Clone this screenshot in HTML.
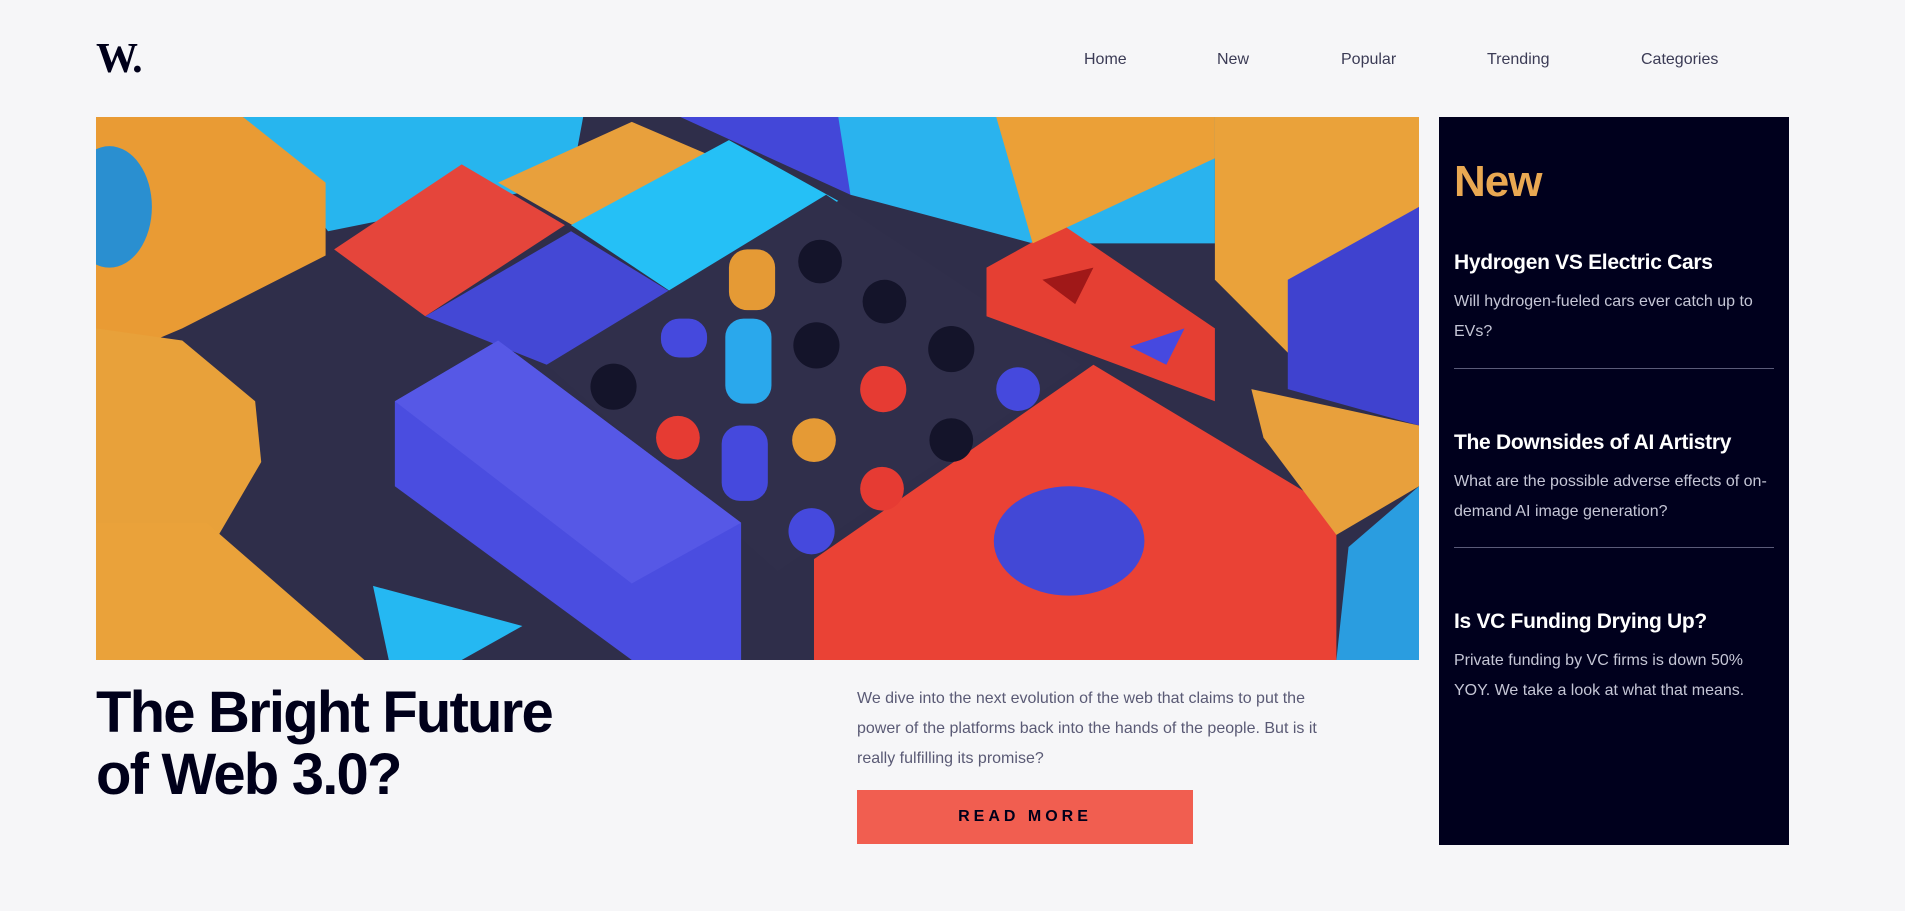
<!DOCTYPE html>
<html><head><meta charset="utf-8"><style>
*{margin:0;padding:0;box-sizing:border-box}
body{width:1905px;height:911px;background:#f6f6f8;font-family:"Liberation Sans",sans-serif;position:relative;overflow:hidden}
.logo{position:absolute;left:96px;top:35px;font-family:"Liberation Serif",serif;font-weight:bold;font-size:42px;color:#00001a;letter-spacing:-2px}
.nav a{position:absolute;top:51px;font-size:16px;color:#3b3b55;text-decoration:none}
.hero{position:absolute;left:96px;top:117px;width:1323px;height:543px;overflow:hidden}
h1{position:absolute;left:96px;top:682px;font-size:58px;line-height:62px;font-weight:bold;color:#00001a;letter-spacing:-1.8px}
.desc{position:absolute;left:857px;top:684px;width:480px;font-size:16px;line-height:30px;color:#5a5a75}
.btn{position:absolute;left:857px;top:790px;width:336px;height:54px;background:#f15e50;color:#00001a;font-weight:bold;font-size:16px;letter-spacing:4px;text-align:center;line-height:54px}
.side{position:absolute;left:1439px;top:117px;width:350px;height:728px;background:#00001d}
.side h2{position:absolute;left:15px;top:40px;font-size:44px;color:#e9a852;letter-spacing:-1px}
.item{position:absolute;left:15px;width:320px}
.item h3{font-size:21px;color:#fff;letter-spacing:-0.3px}
.item p{margin-top:12px;font-size:16px;line-height:30px;color:#c5c6d6}
.sep{position:absolute;left:15px;width:320px;height:1px;background:#5a5b78}
</style></head><body>
<div class="logo">W.</div>
<div class="nav"><a style="left:1084px">Home</a><a style="left:1217px">New</a><a style="left:1341px">Popular</a><a style="left:1487px">Trending</a><a style="left:1641px">Categories</a></div>
<div class="hero"><svg width="1323" height="543" viewBox="79 96 1089 447" preserveAspectRatio="none">
<rect x="79" y="96" width="1089" height="447" fill="#2f2e4a"/>
<polygon points="200,96 480,96 470,150 270,190" fill="#27b5ee"/>
<polygon points="79,96 200,96 268,150 268,210 150,270 79,300" fill="#e99b34"/>
<ellipse cx="90" cy="170" rx="35" ry="50" fill="#2a8fd0"/>
<polygon points="79,270 150,280 210,330 215,380 180,440 79,470" fill="#e8a13a"/>
<polygon points="79,430 170,430 300,543 79,543" fill="#eaa23a"/>
<polygon points="275,205 380,135 465,185 350,260" fill="#e5453b"/>
<polygon points="410,150 520,100 590,130 480,190" fill="#e8a03c"/>
<polygon points="470,185 600,115 690,165 560,245" fill="#25c0f6"/>
<polygon points="560,96 810,96 700,160" fill="#4347d8"/>
<polygon points="690,96 1000,96 1000,200 850,200 700,160" fill="#2ab3ee"/>
<polygon points="350,260 470,190 560,245 450,300" fill="#4448d5"/>
<polygon points="450,300 680,160 890,300 640,470" fill="#302f4b"/>
<polygon points="325,330 410,280 610,430 610,543 520,543 325,400" fill="#4a4de0"/>
<polygon points="325,330 410,280 610,430 520,480" fill="#5658e6"/>
<polygon points="670,460 900,300 1100,420 1100,543 670,543" fill="#ea4235"/>
<polygon points="812,220 875,185 1000,270 1000,330 920,300 812,260" fill="#e53f33"/>
<ellipse cx="880" cy="445" rx="62" ry="45" fill="#4248d6"/>
<polygon points="820,96 1000,96 1000,130 850,200" fill="#eba037"/>
<polygon points="1000,96 1168,96 1168,200 1060,290 1000,230" fill="#eaa23a"/>
<polygon points="1060,230 1168,170 1168,350 1060,320" fill="#3f42cf"/>
<polygon points="1030,320 1168,350 1168,400 1100,440 1040,360" fill="#e8a03c"/>
<polygon points="307,482 430,515 380,543 320,543" fill="#25b8f2"/>
<polygon points="1110,450 1168,400 1168,543 1100,543" fill="#2a9de0"/>
<polygon points="930,285 975,270 960,300" fill="#4649e0"/>
<polygon points="858,230 900,220 885,250" fill="#a01818"/>
<g fill="#14142a"><circle cx="675" cy="215" r="18"/><circle cx="728" cy="248" r="18"/><circle cx="672" cy="284" r="19"/><circle cx="783" cy="287" r="19"/><circle cx="505" cy="318" r="19"/><circle cx="783" cy="362" r="18"/></g>
<rect x="600" y="205" width="38" height="50" rx="15" fill="#e59a35"/>
<rect x="597" y="262" width="38" height="70" rx="15" fill="#2aa8ec"/>
<rect x="544" y="262" width="38" height="32" rx="15" fill="#4549dd"/>
<rect x="594" y="350" width="38" height="62" rx="15" fill="#4549dd"/>
<circle cx="727" cy="320" r="19" fill="#e63b33"/><circle cx="838" cy="320" r="18" fill="#4549dd"/>
<circle cx="558" cy="360" r="18" fill="#e63b33"/><circle cx="670" cy="362" r="18" fill="#e59a35"/>
<circle cx="726" cy="402" r="18" fill="#e63b33"/><circle cx="668" cy="437" r="19" fill="#4549dd"/>
</svg></div>
<h1>The Bright Future<br>of Web 3.0?</h1>
<div class="desc">We dive into the next evolution of the web that claims to put the power of the platforms back into the hands of the people. But is it really fulfilling its promise?</div>
<div class="btn">READ MORE</div>
<div class="side">
<h2>New</h2>
<div class="item" style="top:134px"><h3>Hydrogen VS Electric Cars</h3><p>Will hydrogen-fueled cars ever catch up to EVs?</p></div>
<div class="sep" style="top:251px"></div>
<div class="item" style="top:314px"><h3>The Downsides of AI Artistry</h3><p>What are the possible adverse effects of on-demand AI image generation?</p></div>
<div class="sep" style="top:430px"></div>
<div class="item" style="top:493px"><h3>Is VC Funding Drying Up?</h3><p>Private funding by VC firms is down 50% YOY. We take a look at what that means.</p></div>
</div>
</body></html>
